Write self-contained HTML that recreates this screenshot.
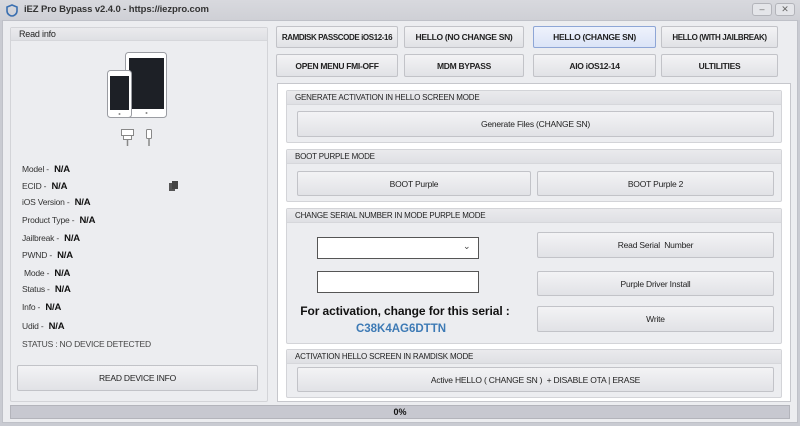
<!DOCTYPE html>
<html><head><meta charset="utf-8"><style>
*{box-sizing:border-box;margin:0;padding:0}
body{width:800px;height:426px;overflow:hidden;background:#c9cbd2;font-family:"Liberation Sans",sans-serif;font-size:9px;color:#222;position:relative}
.a{position:absolute}
.win{left:2px;top:20px;width:796px;height:403px;background:#ecedf0;border:1px solid #bfc1c8}
.btn{position:absolute;background:linear-gradient(#f3f3f5,#e1e2e6);border:1px solid #c2c3c8;border-radius:2px;display:flex;align-items:center;justify-content:center;font-size:8.5px;color:#222;white-space:nowrap;letter-spacing:-0.2px}
.tb{font-weight:bold;font-size:8.5px;letter-spacing:-0.3px}
.grp{position:absolute;background:#ecedf0;border:1px solid #d3d4d8;border-radius:2px}
.gh{height:14px;background:linear-gradient(#eaeaed,#dfe0e4);border-bottom:1px solid #d6d7db;font-size:8px;padding:2px 0 0 8px;color:#222;letter-spacing:-0.2px;white-space:nowrap}
.lbl{position:absolute;left:22px;font-size:8.5px;color:#333;letter-spacing:-0.2px;white-space:nowrap}
.lbl b{font-size:9.5px;color:#111;margin-left:3px}
</style></head><body>
<div class="a" style="left:0;top:0;width:800px;height:20px;background:linear-gradient(#d8d9de,#cfd0d6)"></div>
<svg class="a" style="left:6px;top:4px" width="12" height="13" viewBox="0 0 12 13"><path d="M6 1 L11 3 V7 C11 10 8 12 6 12 C4 12 1 10 1 7 V3 Z" fill="none" stroke="#3a6fb0" stroke-width="1.6"/></svg>
<div class="a" style="left:24px;top:4px;font-size:9.5px;font-weight:bold;color:#333;letter-spacing:-0.1px">iEZ Pro Bypass v2.4.0 - https://iezpro.com</div>
<div class="a" style="left:752px;top:3px;width:20px;height:13px;border:1px solid #b3b4ba;border-radius:3px;background:#e4e5e9;font-size:9px;text-align:center;line-height:10px;color:#666">–</div>
<div class="a" style="left:775px;top:3px;width:20px;height:13px;border:1px solid #b3b4ba;border-radius:3px;background:#e4e5e9;font-size:9px;text-align:center;line-height:11px;color:#666">✕</div>
<div class="a win"></div>

<div class="grp" style="left:10px;top:27px;width:258px;height:375px">
<div class="gh" style="font-size:9px;height:13px;padding-top:1px">Read info</div>
</div>
<svg class="a" style="left:105px;top:50px" width="66" height="100" viewBox="105 50 66 100">
<rect x="125.5" y="52.5" width="41" height="65" rx="3" fill="#fff" stroke="#9a9ca2"/>
<rect x="129" y="58" width="35" height="51" fill="#1d2026"/>
<circle cx="146.5" cy="113" r="1" fill="#888"/>
<rect x="107.5" y="70.5" width="24" height="47" rx="3" fill="#fff" stroke="#9a9ca2"/>
<rect x="110" y="76" width="19" height="34" fill="#1d2026"/>
<circle cx="119.5" cy="114" r="1" fill="#888"/>
<rect x="121.5" y="129.5" width="12" height="6" fill="#fff" stroke="#888"/>
<rect x="123.5" y="135.5" width="8" height="4" fill="#fff" stroke="#888"/>
<line x1="127.5" y1="140" x2="127.5" y2="146" stroke="#888" stroke-width="1.5"/>
<rect x="146.5" y="129.5" width="5" height="9" rx="1" fill="#fff" stroke="#888"/>
<line x1="149" y1="139" x2="149" y2="146" stroke="#888" stroke-width="1.5"/>
</svg>
<div class="lbl" style="top:164px">Model - <b>N/A</b></div>
<div class="lbl" style="top:181px">ECID - <b>N/A</b></div>
<svg class="a" style="left:169px;top:181px" width="9" height="10"><rect x="0" y="2" width="6" height="8" fill="#555"/><rect x="3" y="0" width="6" height="8" fill="#444"/></svg>
<div class="lbl" style="top:197px">iOS Version - <b>N/A</b></div>
<div class="lbl" style="top:215px">Product Type - <b>N/A</b></div>
<div class="lbl" style="top:233px">Jailbreak - <b>N/A</b></div>
<div class="lbl" style="top:250px">PWND - <b>N/A</b></div>
<div class="lbl" style="top:268px;left:24px">Mode - <b>N/A</b></div>
<div class="lbl" style="top:284px">Status - <b>N/A</b></div>
<div class="lbl" style="top:302px">Info - <b>N/A</b></div>
<div class="lbl" style="top:321px">Udid - <b>N/A</b></div>
<div class="lbl" style="top:339px;color:#444">STATUS : NO DEVICE DETECTED</div>
<div class="btn" style="left:17px;top:365px;width:241px;height:26px">READ DEVICE INFO</div>

<div class="btn tb" style="left:276px;top:26px;width:122px;height:22px;font-size:8px;letter-spacing:-0.4px">RAMDISK PASSCODE iOS12-16</div>
<div class="btn tb" style="left:404px;top:26px;width:120px;height:22px">HELLO (NO CHANGE SN)</div>
<div class="btn tb" style="left:533px;top:26px;width:123px;height:22px;background:linear-gradient(#eef2fc,#dbe4f7);border-color:#8ea6d6">HELLO (CHANGE SN)</div>
<div class="btn tb" style="left:661px;top:26px;width:117px;height:22px;font-size:8px;letter-spacing:-0.4px">HELLO (WITH JAILBREAK)</div>
<div class="btn tb" style="left:276px;top:54px;width:122px;height:23px">OPEN MENU FMI-OFF</div>
<div class="btn tb" style="left:404px;top:54px;width:120px;height:23px">MDM BYPASS</div>
<div class="btn tb" style="left:533px;top:54px;width:123px;height:23px">AIO iOS12-14</div>
<div class="btn tb" style="left:661px;top:54px;width:117px;height:23px">ULTILITIES</div>

<div class="a" style="left:277px;top:83px;width:514px;height:319px;background:#fff;border:1px solid #c6c7cc"></div>
<div class="grp" style="left:286px;top:90px;width:496px;height:53px"><div class="gh">GENERATE ACTIVATION IN HELLO SCREEN MODE</div></div>
<div class="btn" style="left:297px;top:111px;width:477px;height:26px">Generate Files (CHANGE SN)</div>
<div class="grp" style="left:286px;top:149px;width:496px;height:53px"><div class="gh">BOOT PURPLE MODE</div></div>
<div class="btn" style="left:297px;top:171px;width:234px;height:25px">BOOT Purple</div>
<div class="btn" style="left:537px;top:171px;width:237px;height:25px">BOOT Purple 2</div>
<div class="grp" style="left:286px;top:208px;width:496px;height:136px"><div class="gh">CHANGE SERIAL NUMBER IN MODE PURPLE MODE</div></div>
<div class="a" style="left:317px;top:237px;width:162px;height:22px;background:#fff;border:1px solid #555"></div>
<div class="a" style="left:463px;top:241px;font-size:9px;color:#444">⌄</div>
<div class="a" style="left:317px;top:271px;width:162px;height:22px;background:#fff;border:1px solid #555"></div>
<div class="a" style="left:286px;top:304px;width:238px;text-align:center;font-size:12px;font-weight:bold;color:#111;letter-spacing:-0.1px">For activation, change for this serial :</div>
<div class="a" style="left:286px;top:323px;width:230px;text-align:center;font-size:11.5px;font-weight:bold;color:#3d7ab5">C38K4AG6DTTN</div>
<div class="btn" style="left:537px;top:232px;width:237px;height:26px">Read Serial&nbsp; Number</div>
<div class="btn" style="left:537px;top:271px;width:237px;height:25px">Purple Driver Install</div>
<div class="btn" style="left:537px;top:306px;width:237px;height:26px">Write</div>
<div class="grp" style="left:286px;top:349px;width:496px;height:49px"><div class="gh">ACTIVATION HELLO SCREEN IN RAMDISK MODE</div></div>
<div class="btn" style="left:297px;top:367px;width:477px;height:25px">Active HELLO ( CHANGE SN )&nbsp; + DISABLE OTA | ERASE</div>

<div class="a" style="left:10px;top:405px;width:780px;height:14px;background:#c7c8d0;border:1px solid #b3b4bb;text-align:center;font-size:9px;font-weight:bold;line-height:12px;color:#111">0%</div>
</body></html>
